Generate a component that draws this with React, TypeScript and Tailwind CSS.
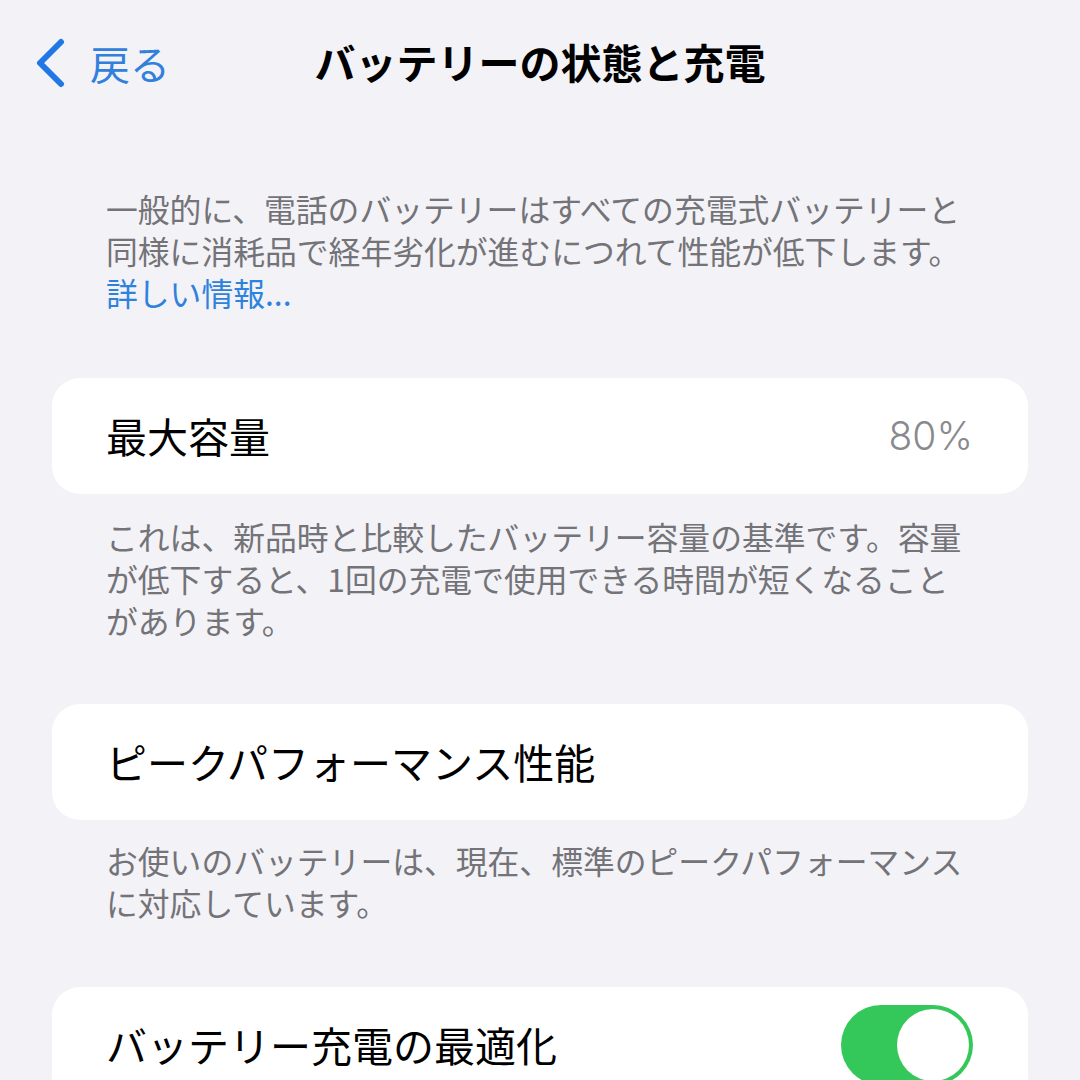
import React from "react";

const font = { fontFamily: '"Noto Sans CJK JP", "Noto Sans", sans-serif' };

const Footer = ({ lines }: { lines: string[] }) => (
  <div className="px-[106px] text-[31.8px] leading-[42px] text-[#737378]">
    {lines.map((l) => (
      <div key={l} className="whitespace-nowrap">{l}</div>
    ))}
  </div>
);

const Card = ({ children }: { children: React.ReactNode }) => (
  <div className="mx-[52px] h-[116px] rounded-[28px] bg-white pl-[54px] pr-[55px] flex items-center justify-between">
    {children}
  </div>
);

const App = () => {
  return (
    <div className="w-[1080px] h-[1080px] overflow-hidden bg-[#f2f2f7]" style={font}>
      <div className="relative h-[126px] flex items-center justify-center">
        <div className="absolute left-[34px] top-[38px] flex items-center gap-[24px]">
          <svg width="32" height="50" viewBox="0 0 32 50" fill="none">
            <path d="M27 4 L6 25 L27 46" stroke="#1f78e6" strokeWidth="6" strokeLinecap="round" strokeLinejoin="round" />
          </svg>
          <span className="text-[40px] leading-none text-[#3080dc]">戻る</span>
        </div>
        <h1 className="mt-[-4px] text-[41px] font-bold leading-none text-black">バッテリーの状態と充電</h1>
      </div>

      <div className="pt-[61px] px-[106px] text-[31.8px] leading-[42px] text-[#737378]">
        <div className="whitespace-nowrap">一般的に、電話のバッテリーはすべての充電式バッテリーと</div>
        <div className="whitespace-nowrap">同様に消耗品で経年劣化が進むにつれて性能が低下します。</div>
        <div className="whitespace-nowrap text-[#2f82dc]">詳しい情報...</div>
      </div>

      <div className="mt-[65px]">
        <Card>
          <span className="text-[41px] text-black">最大容量</span>
          <span className="text-[39px] text-[#8a8a8e]" style={{ fontFamily: '"Inter", "Noto Sans", sans-serif', fontWeight: 300 }}>80%</span>
        </Card>
      </div>

      <div className="mt-[21px]">
        <Footer
          lines={[
            "これは、新品時と比較したバッテリー容量の基準です。容量",
            "が低下すると、1回の充電で使用できる時間が短くなること",
            "があります。",
          ]}
        />
      </div>

      <div className="mt-[63px]">
        <Card>
          <span className="text-[41px] text-black">ピークパフォーマンス性能</span>
        </Card>
      </div>

      <div className="mt-[19px]">
        <Footer lines={["お使いのバッテリーは、現在、標準のピークパフォーマンス", "に対応しています。"]} />
      </div>

      <div className="mt-[64px]">
        <Card>
          <span className="text-[41px] text-black">バッテリー充電の最適化</span>
          <div className="w-[132px] h-[80px] rounded-full bg-[#34c759] p-[4px] flex justify-end">
            <div className="w-[72px] h-[72px] rounded-full bg-white" />
          </div>
        </Card>
      </div>
    </div>
  );
};

export default App;
